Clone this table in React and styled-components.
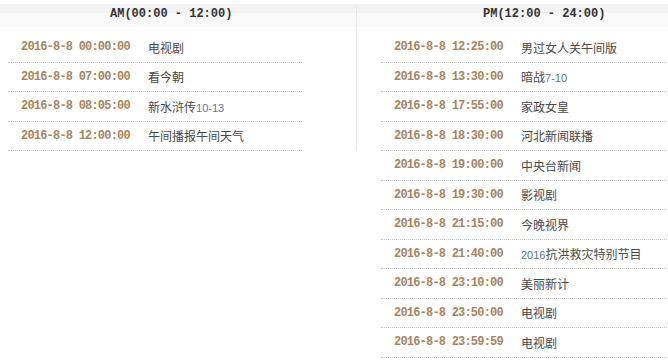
import React from "react";
import styled, { createGlobalStyle } from "styled-components";

const GlobalStyle = createGlobalStyle`
  html, body {
    margin: 0;
    padding: 0;
    background: #fff;
    overflow: hidden;
  }
  body {
    font-family: "Noto Sans CJK SC", "Liberation Sans", sans-serif;
  }
`;

const Page = styled.div`
  display: flex;
  align-items: flex-start;
  width: 668px;
  overflow: hidden;
  padding-top: 4px;
`;

const Column = styled.div`
  flex: none;
  width: ${(p) => p.width}px;
  border-right: ${(p) => (p.divider ? "1px solid #e8e8e8" : "none")};
  padding-bottom: ${(p) => (p.divider ? 0 : 6)}px;
`;

const Header = styled.div`
  height: 23px;
  background: linear-gradient(#f2f2f2 0, #f2f2f2 9px, #f9f9f9 9px, #f9f9f9 100%);
  padding-left: ${(p) => p.indent}px;
  font-family: "Liberation Mono", monospace;
  font-weight: bold;
  font-size: 12px;
  line-height: 21px;
  color: #333;
  white-space: nowrap;
`;

const List = styled.ul`
  list-style: none;
  margin: 6px 0 0 ${(p) => p.indent}px;
  padding: 0;
  width: 294px;
`;

const Row = styled.li`
  display: flex;
  align-items: center;
  height: 28.5px;
  border-bottom: 1px dotted #c4c4c4;
  white-space: nowrap;
`;

const Time = styled.span`
  width: 140px;
  flex: none;
  box-sizing: border-box;
  padding-left: 13px;
  font-family: "Liberation Mono", monospace;
  font-weight: bold;
  font-size: 12px;
  letter-spacing: -0.8px;
  color: #a88560;
`;

const Title = styled.span`
  font-size: 12px;
  color: #484848;
`;

const Num = styled.span`
  font-family: "Liberation Sans", sans-serif;
  font-size: 11px;
  color: #5c7394;
`;

const am = [
  ["00:00:00", "电视剧"],
  ["07:00:00", "看今朝"],
  ["08:05:00", "新水浒传", "10-13"],
  ["12:00:00", "午间播报午间天气"],
];

const pm = [
  ["12:25:00", "男过女人关午间版"],
  ["13:30:00", "暗战", "7-10"],
  ["17:55:00", "家政女皇"],
  ["18:30:00", "河北新闻联播"],
  ["19:00:00", "中央台新闻"],
  ["19:30:00", "影视剧"],
  ["21:15:00", "今晚视界"],
  ["21:40:00", "抗洪救灾特别节目", null, "2016"],
  ["23:10:00", "美丽新计"],
  ["23:50:00", "电视剧"],
  ["23:59:59", "电视剧"],
];

const Schedule = ({ items }) =>
  items.map(([time, name, suffix, prefix]) => (
    <Row key={time}>
      <Time>2016-8-8 {time}</Time>
      <Title>
        {prefix && <Num>{prefix}</Num>}
        {name}
        {suffix && <Num>{suffix}</Num>}
      </Title>
    </Row>
  ));

export default function App() {
  return (
    <>
      <GlobalStyle />
      <Page>
        <Column width={356} divider>
          <Header indent={110}>AM(00:00 - 12:00)</Header>
          <List indent={8}>
            <Schedule items={am} />
          </List>
        </Column>
        <Column width={375}>
          <Header indent={126}>PM(12:00 - 24:00)</Header>
          <List indent={24}>
            <Schedule items={pm} />
          </List>
        </Column>
      </Page>
    </>
  );
}
